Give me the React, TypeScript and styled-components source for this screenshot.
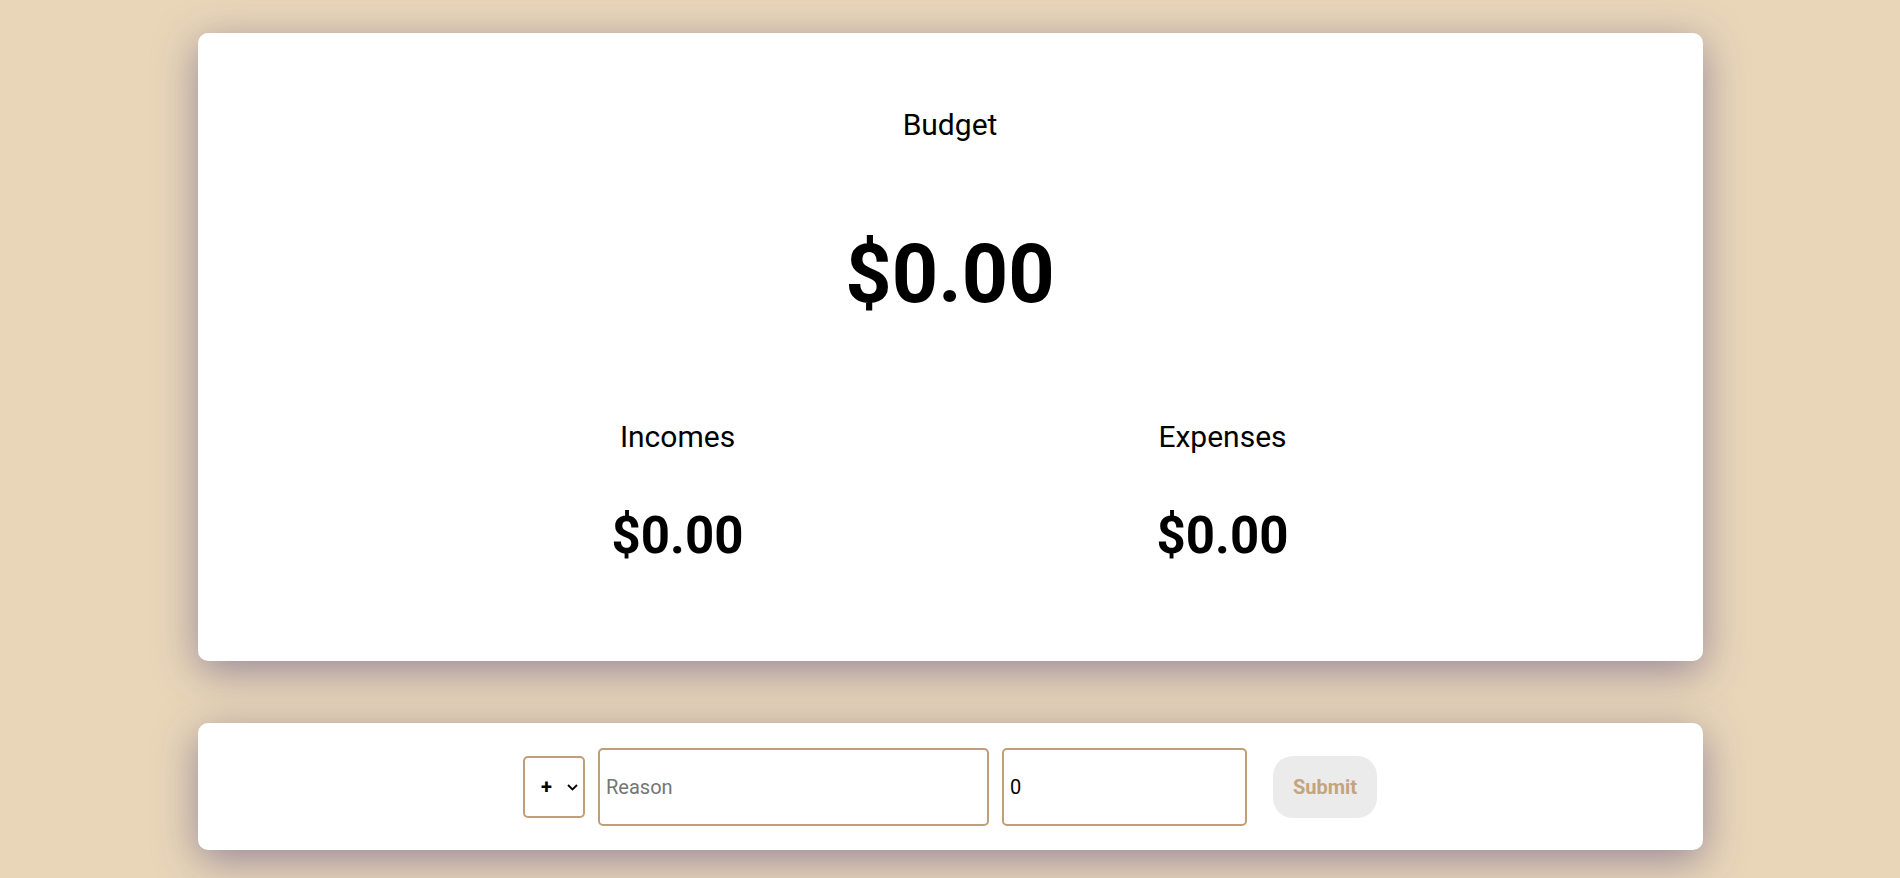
import React, { useState } from "react";
import styled, { createGlobalStyle } from "styled-components";

const GlobalStyle = createGlobalStyle`
  html, body {
    margin: 0;
    padding: 0;
    background: #e9d6b9;
    font-family: Roboto, "Liberation Sans", Arial, sans-serif;
  }
  * { box-sizing: border-box; }
`;

const Page = styled.main`
  min-height: 878px;
  display: flex;
  flex-direction: column;
  align-items: center;
  gap: 62px;
  padding: 33px 0 40px;
`;

const Card = styled.section`
  width: 1505px;
  background: #ffffff;
  border-radius: 10px;
  box-shadow: 0 10px 40px rgba(70, 60, 120, 0.5);
`;

const SummaryCard = styled(Card)`
  padding: 74px 0 96px;
  display: flex;
  flex-direction: column;
  align-items: center;
`;

const Title = styled.h2`
  margin: 0;
  font-size: 30px;
  font-weight: 400;
  line-height: normal;
  color: #000;
  text-align: center;
`;

const Amount = styled.p<{ $size: number; $gap: number }>`
  margin: ${(p) => p.$gap}px 0 0;
  font-size: ${(p) => p.$size}px;
  font-weight: 700;
  line-height: normal;
  color: #000;
  text-align: center;
`;

const Columns = styled.div`
  width: 1090px;
  margin-top: 97px;
  display: flex;
`;

const Column = styled.div`
  flex: 1;
  display: flex;
  flex-direction: column;
  align-items: center;
`;

const FormCard = styled(Card)`
  height: 127px;
  display: flex;
  align-items: center;
  justify-content: center;
`;

const Form = styled.form`
  display: flex;
  align-items: center;
  gap: 13px;
`;

const SelectWrap = styled.span`
  position: relative;
  display: inline-flex;
`;

const Select = styled.select`
  appearance: none;
  -webkit-appearance: none;
  width: 62px;
  height: 62px;
  border: 2px solid #bf9f78;
  border-radius: 5px;
  background: #fff;
  padding: 0 20px 0 16px;
  font-family: Roboto, "Liberation Sans", Arial, sans-serif;
  font-size: 20px;
  font-weight: 700;
  color: #000;
  outline: none;
  cursor: pointer;
`;

const Chevron = styled.svg`
  position: absolute;
  right: 7px;
  top: 50%;
  width: 11px;
  height: 7px;
  margin-top: -3px;
  pointer-events: none;
`;

const Field = styled.input<{ $width: number }>`
  width: ${(p) => p.$width}px;
  height: 78px;
  border: 2px solid #bf9f78;
  border-radius: 5px;
  padding: 0 6px;
  font-family: Roboto, "Liberation Sans", Arial, sans-serif;
  font-size: 20px;
  color: #000;
  background: #fff;
  outline: none;
  &::placeholder {
    color: #757575;
  }
`;

const SubmitButton = styled.button`
  margin-left: 13px;
  width: 104px;
  height: 62px;
  border: none;
  border-radius: 20px;
  background: #ebebeb;
  color: #c2a47f;
  font-family: Roboto, "Liberation Sans", Arial, sans-serif;
  font-size: 20px;
  font-weight: 700;
  cursor: pointer;
`;

export default function App() {
  const [sign, setSign] = useState("+");
  const [reason, setReason] = useState("");
  const [amount, setAmount] = useState("0");

  return (
    <>
      <GlobalStyle />
      <Page>
        <SummaryCard>
          <Title>Budget</Title>
          <Amount $size={81} $gap={85}>$0.00</Amount>
          <Columns>
            <Column>
              <Title>Incomes</Title>
              <Amount $size={51} $gap={52}>$0.00</Amount>
            </Column>
            <Column>
              <Title>Expenses</Title>
              <Amount $size={51} $gap={52}>$0.00</Amount>
            </Column>
          </Columns>
        </SummaryCard>
        <FormCard>
          <Form onSubmit={(e) => e.preventDefault()}>
            <SelectWrap>
              <Select value={sign} onChange={(e) => setSign(e.target.value)}>
                <option value="+">+</option>
                <option value="-">-</option>
              </Select>
              <Chevron viewBox="0 0 11 7" aria-hidden="true">
                <path d="M1 1 L5.5 5.5 L10 1" fill="none" stroke="#000" strokeWidth="1.8" />
              </Chevron>
            </SelectWrap>
            <Field
              $width={391}
              type="text"
              placeholder="Reason"
              value={reason}
              onChange={(e) => setReason(e.target.value)}
            />
            <Field
              $width={245}
              type="number"
              value={amount}
              onChange={(e) => setAmount(e.target.value)}
            />
            <SubmitButton type="submit" disabled>
              Submit
            </SubmitButton>
          </Form>
        </FormCard>
      </Page>
    </>
  );
}
